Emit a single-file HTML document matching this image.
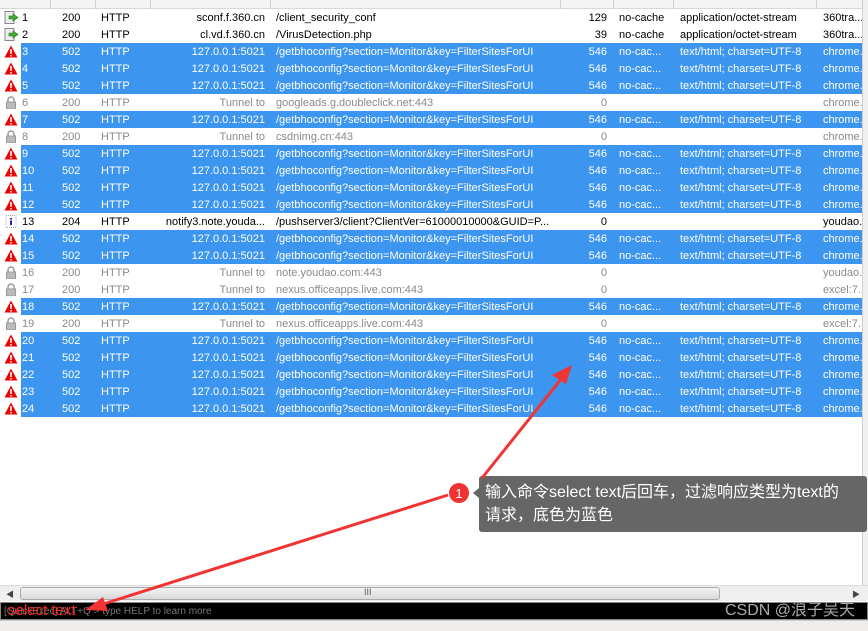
<!DOCTYPE html>
<html><head><meta charset="utf-8"><style>
*{margin:0;padding:0;box-sizing:border-box}
body{width:868px;height:631px;overflow:hidden;background:#fff;position:relative;font-family:"Liberation Sans","Noto Sans CJK SC",sans-serif;font-size:11px;color:#000}
.hd{position:absolute;left:0;top:0;width:862px;height:9px;background:#f4f4f4;border-bottom:1px solid #d8d8d8}
.hd i{position:absolute;top:0;height:9px;border-left:1px solid #d0d0d0}
.r{position:absolute;left:0;width:862px;height:17px;line-height:19px;white-space:nowrap}
.r.b::before{content:"";position:absolute;left:21px;right:0;top:0;bottom:0;background:#3c95ee}
.r span{position:absolute;top:0;overflow:hidden}
.b span{color:#fff}
.g span{color:#8a8a8a}
.n{left:22px}.s{left:62px}.p{left:101px}.h{left:130px;width:135px;text-align:right}
.u{left:276px;width:280px}.y{left:565px;width:42px;text-align:right}.c{left:619px}.t{left:680px}.x{left:823px;width:40px}
.ic{position:absolute;left:4px;top:2px;width:14px;height:13px}
.vs{position:absolute;left:862px;top:0;width:6px;height:585px;background:#f0f0f0;border-left:1px solid #cfcfcf}
</style></head><body>
<div class="hd"><i style="left:50px"></i><i style="left:95px"></i><i style="left:150px"></i><i style="left:270px"></i><i style="left:560px"></i><i style="left:613px"></i><i style="left:673px"></i><i style="left:816px"></i></div>

<svg width="0" height="0" style="position:absolute"><defs>
<symbol id="w" viewBox="0 0 14 13"><path d="M7 0.5L13.5 12.5H0.5Z" fill="#e00"/><rect x="6.2" y="4" width="1.6" height="5" fill="#fff"/><rect x="6.2" y="10" width="1.6" height="1.5" fill="#fff"/></symbol>
<symbol id="l" viewBox="0 0 14 13"><path d="M4 6V4a3 3 0 0 1 6 0v2" fill="none" stroke="#999" stroke-width="1.5"/><rect x="2.5" y="6" width="9" height="7" fill="#bbb" stroke="#999"/></symbol>
<symbol id="d" viewBox="0 0 14 13"><rect x="1" y="0.5" width="9" height="12" fill="#eee" stroke="#888"/><path d="M5 5h4V3l5 3.5-5 3.5V8H5Z" fill="#4a3" stroke="#272" stroke-width=".6"/></symbol>
<symbol id="f" viewBox="0 0 14 13"><rect x="2" y="0.5" width="10" height="12" fill="#fff" stroke="#aaa" stroke-dasharray="1 1"/><rect x="6" y="3" width="2" height="1.5" fill="#22a"/><rect x="6" y="5.5" width="2" height="4.5" fill="#22a"/></symbol>
</defs></svg>

<div class="r" style="top:9px"><svg class="ic"><use href="#d"/></svg><span class="n">1</span><span class="s">200</span><span class="p">HTTP</span><span class="h">sconf.f.360.cn</span><span class="u">/client_security_conf</span><span class="y">129</span><span class="c">no-cache</span><span class="t">application/octet-stream</span><span class="x">360tra...</span></div>
<div class="r" style="top:26px"><svg class="ic"><use href="#d"/></svg><span class="n">2</span><span class="s">200</span><span class="p">HTTP</span><span class="h">cl.vd.f.360.cn</span><span class="u">/VirusDetection.php</span><span class="y">39</span><span class="c">no-cache</span><span class="t">application/octet-stream</span><span class="x">360tra...</span></div>
<div class="r b" style="top:43px"><svg class="ic"><use href="#w"/></svg><span class="n">3</span><span class="s">502</span><span class="p">HTTP</span><span class="h">127.0.0.1:5021</span><span class="u">/getbhoconfig?section=Monitor&amp;key=FilterSitesForUI</span><span class="y">546</span><span class="c">no-cac...</span><span class="t">text/html; charset=UTF-8</span><span class="x">chrome...</span></div>
<div class="r b" style="top:60px"><svg class="ic"><use href="#w"/></svg><span class="n">4</span><span class="s">502</span><span class="p">HTTP</span><span class="h">127.0.0.1:5021</span><span class="u">/getbhoconfig?section=Monitor&amp;key=FilterSitesForUI</span><span class="y">546</span><span class="c">no-cac...</span><span class="t">text/html; charset=UTF-8</span><span class="x">chrome...</span></div>
<div class="r b" style="top:77px"><svg class="ic"><use href="#w"/></svg><span class="n">5</span><span class="s">502</span><span class="p">HTTP</span><span class="h">127.0.0.1:5021</span><span class="u">/getbhoconfig?section=Monitor&amp;key=FilterSitesForUI</span><span class="y">546</span><span class="c">no-cac...</span><span class="t">text/html; charset=UTF-8</span><span class="x">chrome...</span></div>
<div class="r g" style="top:94px"><svg class="ic"><use href="#l"/></svg><span class="n">6</span><span class="s">200</span><span class="p">HTTP</span><span class="h">Tunnel to</span><span class="u">googleads.g.doubleclick.net:443</span><span class="y">0</span><span class="x">chrome...</span></div>
<div class="r b" style="top:111px"><svg class="ic"><use href="#w"/></svg><span class="n">7</span><span class="s">502</span><span class="p">HTTP</span><span class="h">127.0.0.1:5021</span><span class="u">/getbhoconfig?section=Monitor&amp;key=FilterSitesForUI</span><span class="y">546</span><span class="c">no-cac...</span><span class="t">text/html; charset=UTF-8</span><span class="x">chrome...</span></div>
<div class="r g" style="top:128px"><svg class="ic"><use href="#l"/></svg><span class="n">8</span><span class="s">200</span><span class="p">HTTP</span><span class="h">Tunnel to</span><span class="u">csdnimg.cn:443</span><span class="y">0</span><span class="x">chrome...</span></div>
<div class="r b" style="top:145px"><svg class="ic"><use href="#w"/></svg><span class="n">9</span><span class="s">502</span><span class="p">HTTP</span><span class="h">127.0.0.1:5021</span><span class="u">/getbhoconfig?section=Monitor&amp;key=FilterSitesForUI</span><span class="y">546</span><span class="c">no-cac...</span><span class="t">text/html; charset=UTF-8</span><span class="x">chrome...</span></div>
<div class="r b" style="top:162px"><svg class="ic"><use href="#w"/></svg><span class="n">10</span><span class="s">502</span><span class="p">HTTP</span><span class="h">127.0.0.1:5021</span><span class="u">/getbhoconfig?section=Monitor&amp;key=FilterSitesForUI</span><span class="y">546</span><span class="c">no-cac...</span><span class="t">text/html; charset=UTF-8</span><span class="x">chrome...</span></div>
<div class="r b" style="top:179px"><svg class="ic"><use href="#w"/></svg><span class="n">11</span><span class="s">502</span><span class="p">HTTP</span><span class="h">127.0.0.1:5021</span><span class="u">/getbhoconfig?section=Monitor&amp;key=FilterSitesForUI</span><span class="y">546</span><span class="c">no-cac...</span><span class="t">text/html; charset=UTF-8</span><span class="x">chrome...</span></div>
<div class="r b" style="top:196px"><svg class="ic"><use href="#w"/></svg><span class="n">12</span><span class="s">502</span><span class="p">HTTP</span><span class="h">127.0.0.1:5021</span><span class="u">/getbhoconfig?section=Monitor&amp;key=FilterSitesForUI</span><span class="y">546</span><span class="c">no-cac...</span><span class="t">text/html; charset=UTF-8</span><span class="x">chrome...</span></div>
<div class="r" style="top:213px"><svg class="ic"><use href="#f"/></svg><span class="n">13</span><span class="s">204</span><span class="p">HTTP</span><span class="h">notify3.note.youda...</span><span class="u">/pushserver3/client?ClientVer=61000010000&amp;GUID=P...</span><span class="y">0</span><span class="x">youdao...</span></div>
<div class="r b" style="top:230px"><svg class="ic"><use href="#w"/></svg><span class="n">14</span><span class="s">502</span><span class="p">HTTP</span><span class="h">127.0.0.1:5021</span><span class="u">/getbhoconfig?section=Monitor&amp;key=FilterSitesForUI</span><span class="y">546</span><span class="c">no-cac...</span><span class="t">text/html; charset=UTF-8</span><span class="x">chrome...</span></div>
<div class="r b" style="top:247px"><svg class="ic"><use href="#w"/></svg><span class="n">15</span><span class="s">502</span><span class="p">HTTP</span><span class="h">127.0.0.1:5021</span><span class="u">/getbhoconfig?section=Monitor&amp;key=FilterSitesForUI</span><span class="y">546</span><span class="c">no-cac...</span><span class="t">text/html; charset=UTF-8</span><span class="x">chrome...</span></div>
<div class="r g" style="top:264px"><svg class="ic"><use href="#l"/></svg><span class="n">16</span><span class="s">200</span><span class="p">HTTP</span><span class="h">Tunnel to</span><span class="u">note.youdao.com:443</span><span class="y">0</span><span class="x">youdao...</span></div>
<div class="r g" style="top:281px"><svg class="ic"><use href="#l"/></svg><span class="n">17</span><span class="s">200</span><span class="p">HTTP</span><span class="h">Tunnel to</span><span class="u">nexus.officeapps.live.com:443</span><span class="y">0</span><span class="x">excel:7...</span></div>
<div class="r b" style="top:298px"><svg class="ic"><use href="#w"/></svg><span class="n">18</span><span class="s">502</span><span class="p">HTTP</span><span class="h">127.0.0.1:5021</span><span class="u">/getbhoconfig?section=Monitor&amp;key=FilterSitesForUI</span><span class="y">546</span><span class="c">no-cac...</span><span class="t">text/html; charset=UTF-8</span><span class="x">chrome...</span></div>
<div class="r g" style="top:315px"><svg class="ic"><use href="#l"/></svg><span class="n">19</span><span class="s">200</span><span class="p">HTTP</span><span class="h">Tunnel to</span><span class="u">nexus.officeapps.live.com:443</span><span class="y">0</span><span class="x">excel:7...</span></div>
<div class="r b" style="top:332px"><svg class="ic"><use href="#w"/></svg><span class="n">20</span><span class="s">502</span><span class="p">HTTP</span><span class="h">127.0.0.1:5021</span><span class="u">/getbhoconfig?section=Monitor&amp;key=FilterSitesForUI</span><span class="y">546</span><span class="c">no-cac...</span><span class="t">text/html; charset=UTF-8</span><span class="x">chrome...</span></div>
<div class="r b" style="top:349px"><svg class="ic"><use href="#w"/></svg><span class="n">21</span><span class="s">502</span><span class="p">HTTP</span><span class="h">127.0.0.1:5021</span><span class="u">/getbhoconfig?section=Monitor&amp;key=FilterSitesForUI</span><span class="y">546</span><span class="c">no-cac...</span><span class="t">text/html; charset=UTF-8</span><span class="x">chrome...</span></div>
<div class="r b" style="top:366px"><svg class="ic"><use href="#w"/></svg><span class="n">22</span><span class="s">502</span><span class="p">HTTP</span><span class="h">127.0.0.1:5021</span><span class="u">/getbhoconfig?section=Monitor&amp;key=FilterSitesForUI</span><span class="y">546</span><span class="c">no-cac...</span><span class="t">text/html; charset=UTF-8</span><span class="x">chrome...</span></div>
<div class="r b" style="top:383px"><svg class="ic"><use href="#w"/></svg><span class="n">23</span><span class="s">502</span><span class="p">HTTP</span><span class="h">127.0.0.1:5021</span><span class="u">/getbhoconfig?section=Monitor&amp;key=FilterSitesForUI</span><span class="y">546</span><span class="c">no-cac...</span><span class="t">text/html; charset=UTF-8</span><span class="x">chrome...</span></div>
<div class="r b" style="top:400px"><svg class="ic"><use href="#w"/></svg><span class="n">24</span><span class="s">502</span><span class="p">HTTP</span><span class="h">127.0.0.1:5021</span><span class="u">/getbhoconfig?section=Monitor&amp;key=FilterSitesForUI</span><span class="y">546</span><span class="c">no-cac...</span><span class="t">text/html; charset=UTF-8</span><span class="x">chrome...</span></div>

<div class="vs"></div>
<div style="position:absolute;left:0;top:585px;width:868px;height:16px;background:#efefef;border-top:1px solid #ddd">
  <div style="position:absolute;left:6px;top:3px;font-size:8px;color:#444">◀</div>
  <div style="position:absolute;left:20px;top:1px;width:700px;height:13px;background:linear-gradient(#f4f4f4,#d8d8d8);border:1px solid #aaa;border-radius:3px"></div>
  <div style="position:absolute;left:364px;top:1px;font-size:9px;color:#555">III</div>
  <div style="position:absolute;left:852px;top:3px;font-size:8px;color:#444">▶</div>
</div>
<div style="position:absolute;left:0;top:602px;width:868px;height:18px;background:#000;border:1px solid #888;overflow:hidden">
  <div style="position:absolute;left:3px;top:2px;font-size:10px;line-height:13px;color:#777;white-space:nowrap">[QuickExec] ALT+Q &gt; type HELP to learn more</div>
  <div style="position:absolute;left:7px;top:-1px;font-size:15px;line-height:17px;color:#f22;white-space:nowrap">select text</div>
  <div style="position:absolute;right:12px;top:-1px;font-size:16px;line-height:18px;color:#aaa;white-space:nowrap">CSDN @浪子吴天</div>
</div>
<div style="position:absolute;left:0;top:620px;width:868px;height:11px;background:#f0eeec;border-top:1px solid #ccc"></div>

<div style="position:absolute;left:479px;top:476px;width:388px;height:56px;background:#666;border-radius:3px;color:#fff;font-size:16px;line-height:23px;padding:5px 0 0 6px;white-space:nowrap">输入命令select text后回车，过滤响应类型为text的<br>请求，底色为蓝色</div>
<svg style="position:absolute;left:0;top:0" width="868" height="631">
  <path d="M479 488l-6 5 6 5z" fill="#666"/>
  <circle cx="459" cy="493" r="10" fill="#f03434"/>
  <text x="459" y="498" font-size="13" fill="#fff" text-anchor="middle" font-family="Liberation Sans">1</text>
  <line x1="482" y1="478" x2="562" y2="378" stroke="#f03434" stroke-width="3"/>
  <path d="M572 365l-20 10 14 9z" fill="#f03434"/>
  <line x1="448" y1="495" x2="100" y2="605" stroke="#f03434" stroke-width="3"/>
  <path d="M85 610l18-13 5 14z" fill="#f03434"/>
</svg>
</body></html>
